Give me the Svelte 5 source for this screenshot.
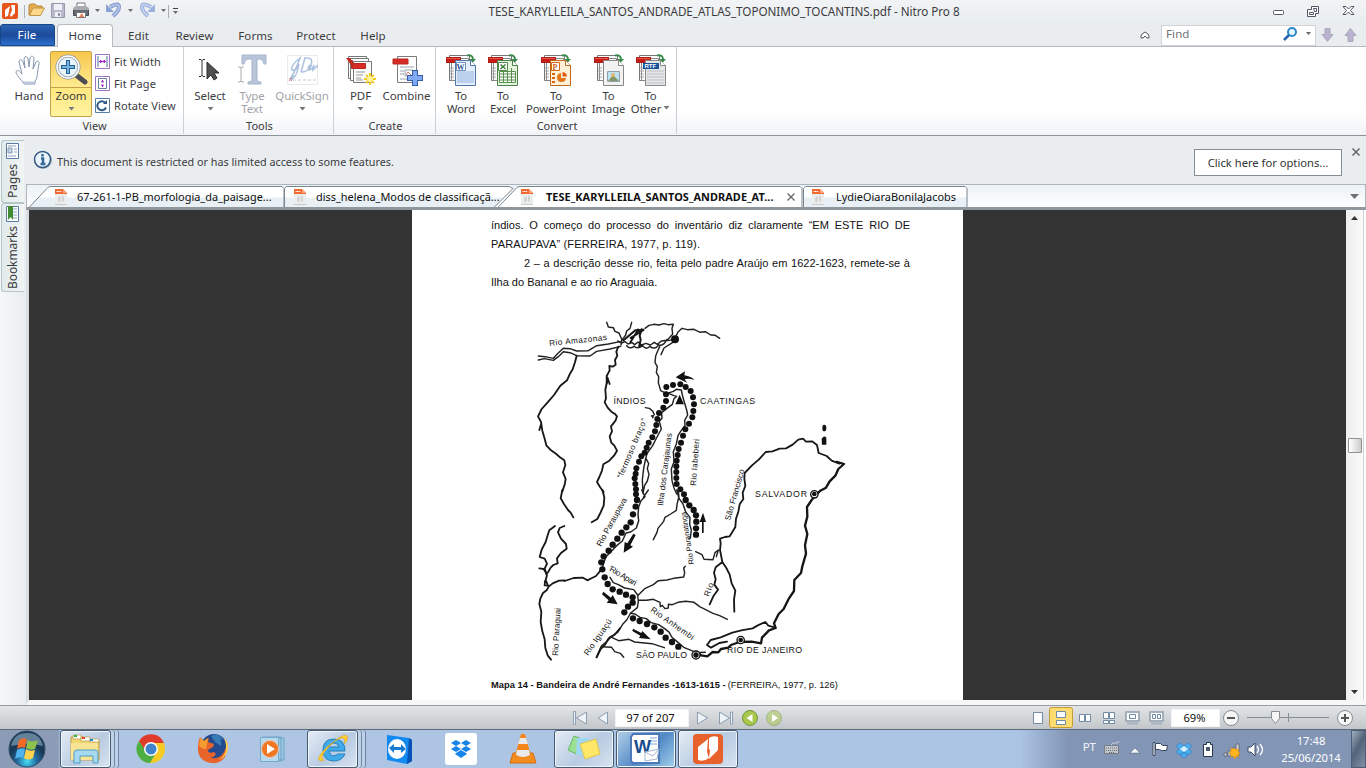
<script>
  const dotsNorth = [[409,216],[429,210],[451,208],[467,216],[482,228],[489,247],[492,268],[490,288],[487,307],[477,326],[466,343],[459,362],[453,383],[446,402],[443,420],[440,437],[439,454],[439,471],[439,489],[440,507],[451,523],[462,538],[408,238],[408,258],[400,278],[387,294],[382,312],[379,330],[375,349],[367,367],[356,383],[350,398],[344,413],[334,424],[327,440],[319,460],[317,476],[314,490],[316,507],[318,523],[318,538]];
  const dotsSouth = [[321,30],[317,50],[309,73],[302,97],[289,112],[275,128],[262,146],[248,164],[236,182],[221,199],[214,217],[217,238],[224,262],[233,282],[248,298],[269,305],[288,314],[308,322],[308,338],[294,350],[283,367],[309,385],[329,393],[351,402],[373,412],[392,425],[407,443],[426,456],[445,470],[467,30],[478,46],[491,60],[498,76],[499,95],[498,115],[498,134]];
  const menus = [['Edit', 43], ['Review', 59], ['Forms', 53], ['Protect', 58], ['Help', 46]];
</script>

{#snippet caret()}<svg class="caret" width="7" height="4" viewBox="0 0 7 4"><path d="M.5 0h6L3.500 3.500z" fill="#777" /></svg>{/snippet}

{#snippet pdfIcon()}
  <svg width="12" height="16" viewBox="0 0 12 16"><path d="M0 0h8l4 4v11.500H0z" fill="#eceded" /><path d="M0 0h8l4 4v1H0z" fill="#f26a30" /><path d="M8 0v4h4" fill="#ffa67e" /><path d="M1.500 2.500h5" stroke="#fff" stroke-width="1.200" stroke-dasharray="1.200 .4" /><path d="M3 12V9l2-2 1 2-1 5zM7 6l2 2v4l-2 1z" fill="#d2d2d2" /><path d="M0 15.500h12" stroke="#c9c9c9" /></svg>
{/snippet}

{#snippet sheets()}
  <path d="M4.500 1.500h20v25h-20z" fill="#fff" stroke="#777" /><path d="M6.500 4.500h17v22h-17z" fill="#fafafa" stroke="#888" /><path d="M5 14h4M5 17h4M5 20h4M5 23h4" stroke="#aaa" />
  <path d="M1 3h15v6H1z" fill="#c91a15" /><path d="M1 3h15v2H1z" fill="#e8574a" /><path d="M1.500 3.500h14v5h-14z" fill="none" stroke="#a52019" />
  <path d="M22 1.500q6-1 6 4" fill="none" stroke="#388a4a" stroke-width="2" /><path d="M24.500 5h6.500l-3.500 4z" fill="#388a4a" />
{/snippet}

{#snippet doc(edge, fill)}
  <path d="M10.500 6.500h15l5 5v20h-20z" {fill} stroke={edge} /><path d="M25.500 6.500v5h5" fill="#fff" stroke={edge} />
{/snippet}

<div class="app">
  <header class="title">
    <svg class="logo" width="16" height="16" viewBox="0 0 16 16"><rect width="16" height="16" rx="2" fill="#e65419" /><path d="M3 14V7l5-4-2 10zM9 2h4v8l-4 4-1-2 2-5z" fill="#fff" /></svg>
    <svg class="quick" width="160" height="20" viewBox="20 0 160 20">
      <path d="M24.500 5v13M168.500 5v13" stroke="#aab0b5" />
      <path d="M29 15V5l2-1h4l2 2h5v3H34z" fill="#e6ad4f" stroke="#b78736" /><path d="M29.500 15.500L33 8h11.500l-4 7.500z" fill="#ffd98b" stroke="#c0944c" />
      <path d="M51.500 3.500h13v14h-13z" fill="#b7b8ca" stroke="#9698ab" /><path d="M54 4h8v6h-8zM55 12h6v5h-6z" fill="#edf0f5" /><path d="M58 13h2v3h-2z" fill="#9092a7" />
      <path d="M77 3h8v7h-8z" fill="#fff" stroke="#777" /><path d="M73.500 8.500h15v7h-15z" fill="#626973" stroke="#454b55" /><path d="M73 8l3-2h10l3 2v2H73z" fill="#a9abb0" /><path d="M76.500 12.500h9v5h-9z" fill="#fff" stroke="#777" /><path d="M79 17l3-4 2 4z" fill="#ef7956" />
      <path d="M110 7q9-5 9 0 0 4-6 9" fill="none" stroke="#8297cb" stroke-width="4" /><path d="M106 4v8h8z" fill="#8ba2d4" /><path d="M110 7q9-5 9 0 0 4-6 9" fill="none" stroke="#afc3eb" stroke-width="2" />
      <path d="M151 7q-9-5-9 0 0 4 6 9" fill="none" stroke="#9aaed8" stroke-width="4" /><path d="M155 4v8h-8z" fill="#9db2df" /><path d="M151 7q-9-5-9 0 0 4 6 9" fill="none" stroke="#c0d2f1" stroke-width="2" />
      <path d="M95 9h5l-2.500 3zM128 9h5l-2.500 3zM161 9h5l-2.500 3zM173 11h5l-2.500 3z" fill="#6b6d70" /><path d="M173 8.500h5" stroke="#444" />
    </svg>
    <span class="doctitle">TESE_KARYLLEILA_SANTOS_ANDRADE_ATLAS_TOPONIMO_TOCANTINS.pdf - Nitro Pro 8</span>
    <svg class="winbtns" width="90" height="20" viewBox="1270 0 90 20" fill="#fff" stroke="#55556a"><rect x="1273.500" y="10.500" width="10" height="4" rx="1" /><path d="M1311.500 6.500h7v7h-3v3h-8v-7h4z" /><path d="M1309.500 12.500h4v2h-4zM1313.500 8.500h3v3h-2z" /><path d="M1343 6.500h3l2.500 2.500 2.500-2.500h3l-3.500 4 3.500 4h-3l-2.500-2.500-2.500 2.500h-3l3.500-4z" /></svg>
  </header>

  <nav class="menu">
    <span class="file">File</span><span class="home">Home</span>
    {#each menus as [name, w]}<span class="mi" style:width="{w}px">{name}</span>{/each}
    <span class="grow"></span>
    <svg class="up" width="10" height="8" viewBox="0 0 10 8"><path d="M1 5q0-2 4-4 4 2 4 4v2H7L5 5 3 7H1z" fill="#fff" stroke="#55585f" /></svg>
    <div class="find"><span>Find</span><svg width="34" height="16" viewBox="0 0 34 16"><circle cx="11" cy="6" r="4" fill="#e8f6ff" stroke="#2588ca" stroke-width="2" /><path d="M8 9l-5 5" stroke="#2863ae" stroke-width="2.500" /><path d="M25 6h5l-2.500 3z" fill="#666" /></svg></div>
    <svg class="arrows" width="40" height="16" viewBox="0 0 40 16" fill="#b9b3cf" stroke="#aaa7bb"><path d="M7 1.500h5v6h3l-5.500 7-5.500-7h3zM30 14.500h5v-6h3l-5.500-7-5.500 7h3z" /></svg>
  </nav>

  <section class="ribbon">
    <div class="group view">
      <div class="tools">
        <div class="tool hand"><svg width="32" height="32" viewBox="0 0 32 32"><path d="M11 30C8 25 3 21 3 18c1-3 4-1 6 2L6 8c0-3 3-3 4 0l2 6-1-9c0-3 4-3 4 0l1 8 1-9c1-3 4-2 4 1l-1 10 3-7c2-2 4 0 3 2-2 8-1 14-4 17v3z" fill="#fff" stroke="#8495ae" /><path d="M10 28.500h12" stroke="#b6c6da" stroke-width="2" /></svg><b>Hand</b></div>
        <div class="tool zoom"><svg width="34" height="32" viewBox="0 0 34 32"><path d="M22 21l9 7" stroke="#4c4d52" stroke-width="5" stroke-linecap="round" /><circle cx="14" cy="13" r="11" fill="#e9f5fb" stroke="#8c969c" stroke-width="3" /><circle cx="14" cy="13" r="11" fill="none" stroke="#fff" stroke-width="1.500" /><path d="M14 6v14M7 13h14" stroke="#215f99" stroke-width="4" /><path d="M14 7v12M8 13h12" stroke="#76b3dd" stroke-width="2" /></svg><b>Zoom</b>{@render caret()}</div>
        <div class="minis">
          <span><svg width="15" height="15" viewBox="0 0 15 15"><path d="M.5.500h14v14H.5z" fill="#fff" stroke="#9c75c5" /><path d="M3 2v11M12 2v11" stroke="#54709c" /><path d="M4 7.500h7M6 6L4.500 7.500 6 9zM9 6l1.500 1.500L9 9z" fill="#a529c8" stroke="#a529c8" /></svg>Fit Width</span>
          <span><svg width="15" height="15" viewBox="0 0 15 15"><path d="M.5.500h14v14H.5z" fill="#fff" stroke="#9c75c5" /><path d="M3.500 2.500h8v10h-8z" fill="#fff" stroke="#68809e" /><path d="M7.500 4v2M6.500 6l1-1 1 1zM7.500 11V9M6.500 9l1 1 1-1z" fill="#a529c8" stroke="#a529c8" /></svg>Fit Page</span>
          <span><svg width="15" height="15" viewBox="0 0 15 15"><path d="M.5.500h14v14H.5z" fill="#fff" stroke="#597da5" /><path d="M11 9.500a4.500 4.500 0 1 1-1-5" fill="none" stroke="#315c89" stroke-width="2" /><path d="M8 6h4V2z" fill="#315c89" /></svg>Rotate View</span>
        </div>
      </div><label class="viewlabel">View</label>
    </div>
    <div class="group toolgroup">
      <div class="tools">
        <div class="tool"><svg width="32" height="32" viewBox="0 0 32 32"><path d="M5 5.500h2l1 1 1-1h2M8 6v16M5 22.500h2l1-1 1 1h2" fill="none" stroke="#333" /><path d="M13 8v17l4-4 3 5 3-2-3-5h5z" fill="#505050" stroke="#303030" /></svg><b>Select</b>{@render caret()}</div>
        <div class="tool dim"><svg width="32" height="32" viewBox="0 0 32 32"><path d="M6 1h24v9h-2q-1-5-5-5h-2v21q0 2 4 2v2H12v-2q4 0 4-2V5h-3q-4 0-5 5H6z" fill="#b8c5da" stroke="#a6b4ca" /><path d="M2 13h2l1 1 1-1h2M5 14v13M2 28h2l1-1 1 1h2" fill="none" stroke="#aaa" /></svg><b>Type<br />Text</b></div>
        <div class="tool dim wide"><svg width="32" height="32" viewBox="0 0 32 32"><path d="M1.500 1.500h30v29h-30z" fill="#fff" stroke="#d7d7d7" stroke-dasharray="1 1" /><path d="M4 25Q9 18 14 4 4 12 6 16q5 1 7-6-2 13-8 16-2-2 3-4M15 18l4-14q9-1 6 7-4 8-10 7m7-2q3-2 3-5-4 1-2 5l3-1 2-4-1 5 2-2 2-2q2 3 3 0" fill="none" stroke="#adc1df" stroke-width="1.500" /><path d="M3 24l3 3M6 24l-3 3" stroke="#e37f83" /><path d="M7 26h24" stroke="#c8c8c8" stroke-dasharray="3 2" /></svg><b>QuickSign</b>{@render caret()}</div>
      </div><label>Tools</label>
    </div>
    <div class="group create">
      <div class="tools">
        <div class="tool"><svg width="32" height="32" viewBox="0 0 32 32"><path d="M3.500 2.500h18v22h-18z" fill="#fff" stroke="#777" /><path d="M5.500 4.500h18v22h-18z" fill="#fff" stroke="#777" /><path d="M8.500 7.500h18v21h-18z" fill="#fafafa" stroke="#777" /><path d="M1.500 4.500h4v6M3.500 6.500h4v6M6.500 9.500h14v5h-14z" fill="#d72b23" stroke="#b6291f" /><path d="M11 18h9M11 21h7M11 24h5M11 26h7" stroke="#999" /><path d="M25 19v12M19 25h12M21 21l8 8M29 21l-8 8" stroke="#f4cb20" stroke-width="2" /><circle cx="25" cy="25" r="3" fill="#fff393" /></svg><b>PDF</b>{@render caret()}</div>
        <div class="tool combine"><svg width="32" height="32" viewBox="0 0 32 32"><path d="M6.500 2.500h19v26h-19z" fill="#fff" stroke="#7b7b7b" /><path d="M2 5h15v5H2z" fill="#d72b23" stroke="#b6291f" /><path d="M9 13h14M9 17h4M9 20h4M9 25h13" stroke="#9aa0a8" /><path d="M14 16h8v6h-8z" fill="#fff" stroke="#9aa0a8" /><path d="M15 21l2-3 3 3" fill="none" stroke="#cf7d76" /><path d="M24 16v16M16 24h16" stroke="#345ca8" stroke-width="6" /><path d="M24 17v14M17 24h14" stroke="#80aaf1" stroke-width="4" /></svg><b>Combine</b></div>
      </div><label>Create</label>
    </div>
    <div class="group convert">
      <div class="tools">
        <div class="tool"><svg width="32" height="32" viewBox="0 0 32 32">{@render sheets()}{@render doc('#5277aa', '#e5effc')}<path d="M12 18h17M12 20h17M12 22h17M12 24h17M12 26h17M12 28h17" stroke="#91b2df" /><path d="M11.500 8.500h9v8h-9z" fill="#fff" stroke="#7093c4" /><text x="11.500" y="15.500" class="ic blue">W</text></svg><b>To<br />Word</b></div>
        <div class="tool excel"><svg width="32" height="32" viewBox="0 0 32 32">{@render sheets()}{@render doc('#478047', '#e5f4dc')}<path d="M12.500 17.500h16v11h-16zM12 20h16M12 23h16M12 26h16M16.500 17v12M20.500 17v12M24.500 14v15" fill="#fff" stroke="#56914c" /><path d="M11.500 8.500h9v8h-9z" fill="#fff" stroke="#518a4b" /><path d="M13.500 10.500l5 4.500M18.500 10.500l-5 4.500" stroke="#3e7e3b" stroke-width="1.500" /></svg><b>To<br />Excel</b></div>
        <div class="tool ppt"><svg width="32" height="32" viewBox="0 0 32 32">{@render sheets()}{@render doc('#be681d', '#fff0d9')}<path d="M11.500 8.500h8v8h-8z" fill="#fff" stroke="#d46b13" /><text x="12.500" y="15.500" class="ic orange">P</text><path d="M21 19a4.500 4.500 0 1 0 5 5h-5z" fill="#e17518" /><path d="M22.500 18a5 5 0 0 1 4.500 4.500h-4.500z" fill="#df5b0e" /><path d="M12 20h3M12 24h3M12 28h3" stroke="#db6508" stroke-width="2" /></svg><b>To<br />PowerPoint</b></div>
        <div class="tool img"><svg width="32" height="32" viewBox="0 0 32 32">{@render sheets()}{@render doc('#888', '#f3f3f3')}<path d="M14.500 17.500h12v10h-12z" fill="#bde3f0" stroke="#91a1aa" /><path d="M15 27l5-6 6 6z" fill="#889769" /><circle cx="20" cy="21" r="2" fill="#e6b267" /></svg><b>To<br />Image</b></div>
        <div class="tool other"><svg width="32" height="32" viewBox="0 0 32 32">{@render sheets()}{@render doc('#888', '#e4e6e8')}<path d="M12 17h17M12 20h17M12 23h17M12 26h17M12 29h17" stroke="#bfc3c7" /><path d="M8 9h16v6H8z" fill="#175199" /><text x="9.500" y="14" class="rtf">RTF</text></svg><b>To<br />Other<span>{@render caret()}</span></b></div>
      </div><label>Convert</label>
    </div>
  </section>

  <main>
    <aside>
      <div class="side pages"><svg width="13" height="16" viewBox="0 0 13 16"><path d="M.5.500h12v15H.5z" fill="#fff" stroke="#597da5" /><path d="M2 3h8M8 6h3M8 9h3M2 13h8" stroke="#85a1c1" /><path d="M2 5h4v5H2z" fill="#c4d5e7" stroke="#8199b4" /></svg><span>Pages</span></div>
      <div class="side marks"><svg width="13" height="16" viewBox="0 0 13 16"><path d="M.5.500h12v15H.5z" fill="#fff" stroke="#597da5" /><path d="M7 3h4M7 6h4M7 9h4M7 12h4" stroke="#85a1c1" /><path d="M2 0h5v14l-2.500-3L2 14z" fill="#3f8c31" /></svg><span>Bookmarks</span></div>
    </aside>
    <div class="work">
      <div class="notice">
        <svg width="20" height="20" viewBox="0 0 20 20"><circle cx="10" cy="10" r="9" fill="#9fb0c2" /><circle cx="9.500" cy="9.500" r="8" fill="#eaf4fc" stroke="#315881" stroke-width="1.500" /><path d="M9.500 4v2.500M8 8.500h2V14m-2.500 0h5" fill="none" stroke="#366996" stroke-width="2.500" /></svg>
        <span class="msg">This document is restricted or has limited access to some features.</span>
        <button>Click here for options...</button>
        <svg class="x" width="10" height="10" viewBox="0 0 10 10"><path d="M1.500 1.500l7 7M8.500 1.500l-7 7" stroke="#666" stroke-width="1.500" /></svg>
      </div>
      <div class="tabs">
        <div class="tab t1"><svg class="shape" width="257" height="23" viewBox="0 0 257 23"><path d="M0 22.500L19 2.500Q20 .5 23 .5H254l2 2v20" fill="url(#tabshade)" stroke="#7b858d" /><defs><linearGradient id="tabshade" x2="0" y2="1"><stop offset=".48" stop-color="#fff" /><stop offset=".52" stop-color="#e9f0f5" /></linearGradient></defs></svg><i>{@render pdfIcon()}</i><span>67-261-1-PB_morfologia_da_paisage...</span></div>
        <div class="tab t2"><svg class="shape" width="238" height="23" viewBox="0 0 238 23"><path d="M.5 22.500v-20l2-2H225l4 2-20 20z" fill="url(#tabshade)" stroke="#7b858d" /></svg><i>{@render pdfIcon()}</i><span>diss_helena_Modos de classificaçã...</span></div>
        <div class="tab t3"><svg class="shape" width="313" height="23" viewBox="0 0 313 23"><path d="M0 22.500L19 2.500Q20 .5 23 .5H303l2 2v20" fill="#fff" stroke="#7b858d" /></svg><i>{@render pdfIcon()}</i><span>TESE_KARYLLEILA_SANTOS_ANDRADE_AT...</span><svg class="x" width="10" height="10" viewBox="0 0 10 10"><path d="M1.500 1.500l7 7M8.500 1.500l-7 7" stroke="#666" stroke-width="1.300" /></svg></div>
        <div class="tab t4"><svg class="shape" width="165" height="23" viewBox="0 0 165 23"><path d="M.5 22.500v-20l2-2H162l2 2v20" fill="url(#tabshade)" stroke="#7b858d" /></svg><i>{@render pdfIcon()}</i><span>LydieOiaraBonilaJacobs</span></div>
        <svg class="menuarrow" width="9" height="5" viewBox="0 0 9 5"><path d="M0 0h9L4.500 5z" fill="#6d7174" /></svg>
      </div>
      <div class="viewer">
        <article>
          <p class="spread">índios. O começo do processo do inventário diz claramente “EM ESTE RIO DE</p>
          <p class="cite">PARAUPAVA” (FERREIRA, 1977, p. 119).</p>
          <p class="indent spread">2 – a descrição desse rio, feita pelo padre Araújo em 1622-1623, remete-se à</p>
          <p>Ilha do Bananal e ao rio Araguaia.</p>
          <svg class="map" width="330" height="350" viewBox="530 315 330 350">
            <g transform="translate(530 315) scale(.333333)">
              <g class="line">
                <path d="M25 123l20 2 25 5 14-15 16-15 20 1 20 7 35-1 25-15 35-5 35-7M25 135l18-4 27 5 15-11 15-15 20 3 20 9 40 1 20-14 40-7 32-8" />
                <path d="M230 22l5 14 15 2 5 11 12 5 8 18-2 18M305 22l-5 18-10 8-3 12-12 17M345 40l12-9 15-3 15 2 15-4 12 3 16-1-4 12 2 18-8 8-8 10-18 2-12 10-9-6-12 8-13-5-14 5-10-9-10 8-8-6-12 4-9-7-10 4-12-6M290 92q10 12 22 2q10 10 26-2q10 14 22 2q14 12 26-4q16 4 25-17" />
                <path d="M413 77l20-4 11-22 12-11 16 4 20-1 18 9 16-2 16 10 14 1 13 9M389 95l-6 13-6 15-2 20 7 12-3 18 7 12-1 18 7 24 18 9 20-7 9-6 15 2 3 15 5 18 8 27 3 15-9 16 1 15-13 18-8 13-5 25-9 23 2 30-8 22 2 35 6 22 8 18M432 80l-30 19-9 20" />
                <path d="M408 232l24 10 8 2-8 7-5 17-17 13-15 12 1 17-8 9 6 23-13 24-13 26-17 24-5 19-5 25-4 35 2 40M348 430l8 16-4 15 5 17-5 20-8 13-5 23M346 278l12 2 10 8 5 11M364 303l6-1-2 6" />
              </g>
              <g class="heavy"><path d="M140 122l-5 20-7 21-8 13-9 20-20 16-19 28-19 22-18 20-11 22 9 17 4 26 7 24 5 20 12 13 18 13 11 10 13 9 3 14-7 22 8 20-3 17-7 20M28 345l6-20M265 95l-6 15 3 12-7 13 2 14-9 6-10-2 1 13-9 17v21l-4 21 2 25-4 12 9 16 11 12 10 6 7 8-4 12-14 18 3 15-7 15 5 19 9 9 8 15-9 15-14 15-18 11-4 19-8 19-7 15 9 15 11 15M231 205l1-18 7 20" /></g>
              <g class="thick"><path d="M278 78l38-32 26-2-42 26m0 14l26-43m10 0l-7 21 3 12-5 22m-2-45l12-8m-7 44l6 8" /></g>
              {#each dotsNorth as [x, y]}<circle cx={x} cy={y} r="9" />{/each}
              <circle cx="435" cy="73" r="12" /><path d="M436 268l13-29 13 29zM437 187l28-18-2 12q21 3 30 14-17-6-29-2l7 10z" />
            </g>
            <g transform="translate(530 490) scale(.333333)">
              <g class="line">
                <path d="M335 0l10 20-12 12-7 18-2 24 2 18-7 22-17 12-14 3-11 24-17 14-15 16-17 17-8 22-3 14M340 22l15-22M440 0l6 22-5 22-2 17-17 11-17 10-4 12-17 21-3 12-11 22M445 0l2 25 12 17 8 24 13 16-1 21 5 17-3 24-4 2" />
                <path d="M240 262l10 16 15 6 19 10 27 5 12 16 2 19-3 19-20 16-12 21-12 13-15 24-20 13-11 13-18 15-15 34M325 315l19-19 26-12 15-12 26-2 20-5 30-4 3-13-3-14 5-5M325 330l25 1 20-3 20 9 1 13 6-4 8 10 10-2v-11l12 1 17-7 23-3 25 3 17 13 18 9 22 11 20 7 23 11" />
                <path d="M301 370l14 2 15 10 19 4 14 12 23 6 17 11 15 12 7 14 19 16 17 15 17 7 21 9 27-1M240 440l26 12 31-4 17 8 30 3 22 2 37 12M215 470l30 2 9 13 17 5 10 12" />
              </g>
              <g class="heavy"><path d="M97 0l-5 25 10 17 12 18 8 8 8 14M217 0l6 22-2 25-10 22-9 18-17 10M75 108l-17 13-5 15-6 20-12 23-6 22 15 5 7 15-7 15 7 20-4 14 7 17-10-1 1-13m59-2l-17 1-19 8-12 10-6 11-11 8-8 17-3 16 6 23-2 31 5 28 7 24 2 26 7 22 10 13M104 273l27-9 28-1 13 8 14-7 12-6 16-19M103 108l-14 6-5 13 9 19 15 16 2 14-17 13-12 16 2 15-13 5-8 8-8 14-6 5m-20-17l13 2 6 10M270 415l-17 20-17 10-11 19-13 13-12 25" /></g>
              {#each dotsSouth as [x, y]}<circle cx={x} cy={y} r="9.500" />{/each}
              <path d="M317 135l-16 31 8 4-28 18 3-32 8 4 18-29zM220 305l23 18 5-8 15 28-33-5 6-7-20-18zM309 416l25 13 3-6 25 25-35-4 4-7-24-14zM516 129V96h-7l10-28 9 28h-7v33z" />
            </g>
            <g transform="translate(690 410) scale(.333333)">
              <g class="line"><path d="M17 425l19 9 6 14 27 1 6-21 10-8-6 20" /></g>
              <g class="heavy"><path d="M90 420l7 36 12 18 10 20 6 26 11 22-4 27 1 36M97 456l-20 16-5 16 5 20-4 16 11 15-13 18-12 26M90 422l2-22-2-14 15-5 14-2 8-13 9-15 2-25 7-21 4-22 11-16-2-19 8-20-3-22 1-17 22-23 21-18 20-22 20-2 22-8 19-1 20-11 17-15 14-3 9 9 18-1 15 11 5 24 24 9 15 14 23 9" /><path d="M253 652l-18-5-9-11-24 11-14 8-34 6-27 7-35 14-30 8-11 15 12 8 25-14 23-4" /></g>
              <g class="coast"><path d="M438 155l24 7-17 15-9 20-17 17-11 19-17 9-15 15-11 13-14 21 1 29-7 27 7 25-7 34 3 25-11 38-4 20-20 21-1 33-15 22-16 32-15 15-14 28 5 14-20 7-21 22-3 17-28-5-36 1-26 9-8 8-22 4-8 10-17-1-16 13-19-3-10-10" /></g>
              <ellipse cx="403" cy="54" rx="6" ry="10" /><path d="M395 86q8-12 14-3v21h-13z" />
              <g fill="#fff" stroke="#111" stroke-width="4"><circle cx="373" cy="253" r="11" /><circle cx="152" cy="690" r="11" /><circle cx="18" cy="735" r="12" /></g><circle cx="373" cy="252" r="7" /><circle cx="152" cy="690" r="7" /><circle cx="18" cy="735" r="8" />
            </g>
            <g class="labels">
              <text transform="translate(549.500 346) rotate(-6)" textLength="58">Rio Amazonas</text><text x="613.500" y="403.500" textLength="32" class="cap">ÍNDIOS</text><text x="700" y="404" textLength="55" class="cap">CAATINGAS</text>
              <text transform="translate(622 479) rotate(-67)" textLength="64">“fermoso braço”</text><text transform="translate(663 506) rotate(-83)" textLength="73">Ilha dos Carajaunas</text><text transform="translate(696 486) rotate(-86)" textLength="47">Rio Iabeberi</text>
              <text transform="translate(601 547) rotate(-61)" textLength="54">Rio Paraupava</text><text transform="translate(694 564) rotate(-99)" textLength="53" class="small">Rio Paranatinga</text><text transform="translate(608 570) rotate(31)" textLength="31">'Rio Apari</text>
              <text transform="translate(650 611) rotate(35)" textLength="51">Rio Anhembi</text><text transform="translate(558 656) rotate(-87)" textLength="48">Rio Paraguai</text><text transform="translate(588 656) rotate(-55)" textLength="42">Rio Iguaçú</text>
              <text transform="translate(730 521) rotate(-74)" textLength="53">São Francisco</text><text transform="translate(709 597) rotate(-70)" textLength="14">Rio</text><text x="755" y="497" textLength="52" class="cap">SALVADOR</text><text x="636" y="658" textLength="51" class="cap">SÃO PAULO</text><text x="727" y="653" textLength="75" class="cap">RIO DE JANEIRO</text>
            </g>
          </svg>
          <footer><strong>Mapa 14 - Bandeira de André Fernandes -1613-1615 - </strong><span>(FERREIRA, 1977, p. 126)</span></footer>
        </article>
        <div class="scroll"><svg width="7" height="4" viewBox="0 0 7 4"><path d="M0 4h7L3.500 0z" fill="#333" /></svg><i></i><svg width="7" height="4" viewBox="0 0 7 4"><path d="M0 0h7L3.500 4z" fill="#333" /></svg></div>
      </div>
    </div>
  </main>

  <div class="status">
    <svg class="navs" width="40" height="16" viewBox="0 0 40 16" fill="#edf3f8" stroke="#8c9eb0"><path d="M.5 1.500h2v13h-2zM13.500 2v12L3.500 8zM34.500 2v12L25 8z" /></svg>
    <span class="field pageno">97 of 207</span>
    <svg class="navs2" width="88" height="18" viewBox="696 708 88 18" fill="#edf3f8" stroke="#8c9eb0"><path d="M697.500 711v12l10-6zM719.500 711v12l10-6zM730.500 711h2v12h-2z" /><g stroke="#6f9741" fill="#a8c74b"><circle cx="750" cy="717" r="7.500" /><circle cx="774" cy="717" r="7.500" opacity=".5" /></g><path d="M752.500 713v8l-6-4zM772 713v8l6-4z" fill="#fff" stroke="none" /></svg>
    <span class="grow"></span>
    <svg class="modes" width="140" height="22" viewBox="1029 706 140 22" fill="#fff" stroke="#718aa6"><path d="M1033.500 711.500h9v11h-9z" /><rect x="1049.500" y="706.500" width="23" height="20" rx="2" fill="#ffdc70" stroke="#c69a35" /><path d="M1056.500 710.500h9v6h-9zM1056.500 719.500h9v4h-9zM1079.500 713.500h5v7h-5zM1085.500 713.500h5v7h-5zM1103.500 711.500h5v6h-5zM1109.500 711.500h5v6h-5zM1103.500 719.500h5v3h-5zM1109.500 719.500h5v3h-5z" /><path d="M1126 711h13v9h-13zM1150 711h13v9h-13z" stroke="#a3afbb" stroke-width="2" /><path d="M1129.500 713.500h6v4h-6zM1152.500 713.500h3v4h-3zM1157.500 713.500h3v4h-3z" /><path d="M1127 722.500h11M1151 722.500h11" stroke="#a3afbb" stroke-width="2" /></svg>
    <span class="field pct">69%</span>
    <svg class="slider" width="140" height="20" viewBox="1221 707 140 20" fill="#f6f6f6" stroke="#868d94"><circle cx="1231" cy="717" r="7.500" /><circle cx="1345" cy="717" r="7.500" /><path d="M1247 716.500h82M1288.500 712v9" /><path d="M1271.500 710.500h8v7l-4 5-4-5z" /><path d="M1227 717h8M1341 717h8M1345 713v8" stroke="#555" stroke-width="2" /></svg>
  </div>

  <div class="taskbar">
    <div class="start"><svg width="38" height="38" viewBox="0 0 38 38"><defs><radialGradient id="orb" cy=".85"><stop stop-color="#45dcf3" /><stop offset=".55" stop-color="#226a9e" /><stop offset="1" stop-color="#193954" /></radialGradient></defs><circle cx="19" cy="19" r="18" fill="url(#orb)" stroke="#324e6a" /><path d="M3 16Q6 3 19 3t16 13q-15-4-32 0" fill="#8ca9c0" opacity=".65" /><path d="M11 10q4-3 8-1l-2 9q-4-2-8 1z" fill="#f26a27" /><path d="M20 10q4 3 10 0l-3 9q-5 2-9-1z" fill="#8ec34b" /><path d="M9 20q4-3 8-1l-2 9q-4-2-8 1z" fill="#4fb3ee" /><path d="M18 19q4 3 9 1l-2 8q-5 3-9 0z" fill="#ffd24e" /></svg></div>
    <div class="task on stack"><svg width="34" height="32" viewBox="0 0 34 32"><path d="M2 4h12l2 3h14v20H2z" fill="#efd774" stroke="#bd9e45" /><path d="M4 2h8v4H4zM12 4h9v4h-9zM21 6h9v3h-9z" fill="#fff" stroke="#b99a45" stroke-width=".7" /><path d="M5 2h3v2H5z" fill="#28b943" /><path d="M13 4h3v2h-3z" fill="#e54925" /><path d="M21 6h3v2h-3z" fill="#258bd1" /><path d="M2 10h27v17H2z" fill="#f8e494" /><path d="M5 30V20q0-3 3-3h19q2 0 2 3v10h-5v-7H11v7z" fill="#a5daf0" stroke="#519cc2" /></svg></div>
    <div class="task c62 chrome"><svg width="30" height="30" viewBox="0 0 30 30"><circle cx="15" cy="15" r="14" fill="#f6cb25" /><path d="M3 7A14 14 0 0 1 28 9H15l-6 8z" fill="#e13b2e" /><path d="M3 7A14 14 0 0 0 14 29l6-10-8 2z" fill="#4daf43" /><circle cx="15" cy="15" r="7" fill="#fff" /><circle cx="15" cy="15" r="5.500" fill="#3e83cb" /></svg></div>
    <div class="task c62 chrome"><svg width="32" height="32" viewBox="0 0 32 32"><circle cx="17" cy="14" r="13" fill="#234a8c" /><path d="M14 3q7-4 13 4-3-1-4-1 2 3 1 7l-6-4z" fill="#387bb5" /><path d="M3 4l4 4q3-3 5-3l-1 4 6 2-1 3-5 3q0 4 6 2l2 2q-3 5-7 3 9 4 15-5 4-7 2-14 4 10-1 19-5 7-13 6Q0 28 1 14q0-6 2-10z" fill="#e9642b" /><path d="M27 5q6 14-5 22 12-6 8-18z" fill="#ffd34d" /><path d="M3 5l4 3 4-3-1 6-1 5q-5 0-7-4z" fill="#f79c31" /></svg></div>
    <div class="task c60 chrome"><svg width="30" height="28" viewBox="0 0 30 28"><path d="M7 3h18v22H7zM4 2h18v24H4z" fill="#9bc8e5" stroke="#6da3c5" /><path d="M1.500 2.500h18v24h-18z" fill="#b7d9ee" stroke="#75a9ca" /><circle cx="11" cy="14" r="8.500" fill="#ef7622" stroke="#f1c5aa" /><path d="M8 9l8 5-8 5z" fill="#fff" /></svg></div>
    <div class="task on stack ie"><svg width="32" height="32" viewBox="0 0 32 32"><path d="M28 18q0-12-11-12Q6 6 6 17t11 11q8 0 11-7h-7q-7 5-9-3zm-16-4q1-4 5-4t5 4z" fill="#40aaea" stroke="#2581bd" /><path d="M5 28q-9 0 5-14Q27-1 30 3q2 3-3 8 2-6-2-6-7 1-16 12-7 9-2 10z" fill="#ffcd32" stroke="#d5a224" stroke-width=".6" /></svg></div>
    <div class="task c62 tv"><svg width="28" height="32" viewBox="0 0 28 32"><path d="M2 2l22 3 3 2v21l-5 3-20-4z" fill="#128af2" /><path d="M24 5l3 2v21l-5 3z" fill="#0752b4" /><ellipse cx="12" cy="16" rx="9" ry="10" fill="#fff" /><path d="M4 15l5-4v3h7v-3l5 5-5 4v-3H9v3z" fill="#167ad2" /></svg></div>
    <div class="task c62"><svg width="32" height="32" viewBox="0 0 32 32"><rect width="32" height="32" rx="3" fill="#fff" /><path d="M6 10l5-3 5 3-5 3zM16 10l5-3 5 3-5 3zM6 16l5-3 5 3-5 3zM16 16l5-3 5 3-5 3zM10 21l1-1 5-3 5 3 1 1-6 4z" fill="#1684e8" /></svg></div>
    <div class="task c62"><svg width="30" height="32" viewBox="0 0 30 32"><path d="M5 20h20l3 10H2z" fill="#f38e1e" stroke="#d36c0c" /><path d="M13 1h4l6 22q-8 4-16 0z" fill="#f4851a" /><path d="M12 5h6l2 6H10zM9 17h12l1 5q-7 4-14 0z" fill="#e9e9e9" /></svg></div>
    <div class="task on app1"><svg width="34" height="28" viewBox="0 0 34 28"><path d="M7 1l11 4-6 15-11-5z" fill="#9bdf94" stroke="#69b966" /><path d="M10 3h12v17H9z" fill="#a1d8f1" /><path d="M13 9l16-5 4 15-15 5z" fill="#ffe867" stroke="#dec64f" /></svg></div>
    <div class="task on app2 word"><svg width="32" height="32" viewBox="0 0 32 32"><path d="M3 1h26v29H3l-2-2V4z" fill="#fff" stroke="#4a78b9" stroke-width="2" /><path d="M20 5h7M20 8h7M20 11h7" stroke="#83a6d4" /><text x="4" y="20" class="bigw">W</text><path d="M15 19l14-3-2 10-12 2z" fill="#fff" stroke="#a3b5ce" /><path d="M15 19l8 4 6-7" fill="none" stroke="#a3b5ce" /></svg></div>
    <div class="task on app3"><svg width="32" height="32" viewBox="0 0 32 32"><rect x="1" y="1" width="30" height="30" rx="4" fill="#e8602b" /><path d="M6 27V14l10-8-1 13 2 6q-5 4-11 2M17 5q4-3 9-1v13l-9 9 1-9q-2-1-1-3z" fill="#fff" /></svg></div>
    <span class="grow"></span>
    <span class="lang">PT</span>
    <svg class="tray" width="166" height="24" viewBox="1102 736 166 24"><path d="M1104.500 744.500h14v8h-14z" fill="#c4c9cf" stroke="#777c83" /><path d="M1106 747h12M1106 749.500h12M1109 751.500h6" stroke="#666" stroke-dasharray="1 1" /><path d="M1111 744q1-3 5-2 3 0 3-2" fill="none" stroke="#ccd2d9" /><path d="M1130 752h10l-5-5z" fill="#fff" stroke="#596781" stroke-width=".6" /><path d="M1153 741.500h2v13h-2z" fill="#fff" stroke="#384861" /><path d="M1155.500 742.500h5l2 2h5l-1 5h-5l-2-1h-4z" fill="#fff" stroke="#384861" /><path d="M1176 745l4-3 4 3 4-3 4 3-3 3 3 3-4 3-4-3-4 3-4-3 3-3zM1180 754l4-3 4 3-4 3z" fill="#4ca9eb" stroke="#247cbb" stroke-width=".5" /><path d="M1180 748l4-3 4 3-4 3z" fill="#d9effc" /><path d="M1206.500 741.500h4v2h2v12h-9v-12h3z" fill="#fff" stroke="#27354b" /><path d="M1206 746h4v4h-4z" fill="#4b5c75" /><path d="M1224 755h3v-3h-3zM1228 755h3v-5h-3zM1232 755h3v-8h-3zM1236 755h3v-12h-3z" fill="#caced4" stroke="#535861" stroke-width=".7" /><path d="M1235 747l1 2 3-1-1 3 2 1-2 2 1 2-3-1-1 3-2-3-2 1v-3l-2-1 2-2v-3l3 1z" fill="#ffb51e" stroke="#e78b10" stroke-width=".6" /><path d="M1248 746h3l4-4v13l-4-4h-3z" fill="#fff" stroke="#3f4e66" /><path d="M1257 745q3 4 0 7M1260 743q5 6 0 11" fill="none" stroke="#fff" stroke-width="1.300" /></svg>
    <div class="clock">17:48<br />25/06/2014</div><span class="peek"></span>
  </div>
</div>

<style>
  :global(body) { margin: 0; overflow: hidden; }
  * { box-sizing: border-box; }
  svg { display: block; flex: none; }
  .app { width: 1366px; height: 768px; display: flex; flex-direction: column; background: #e9edef; font: 11.5px "Noto Sans", "Open Sans", sans-serif; color: #3c3c3f; white-space: nowrap; overflow: hidden; }
  .grow { flex: 1; }
  .title { height: 24px; display: flex; background: linear-gradient(#f2f3f5, #e8edef); flex: none; }
  .logo { margin: 3px 2px 0 2px; }
  .doctitle { width: 1090px; text-align: center; padding-right: 2px; line-height: 23px; letter-spacing: -.04px; font-size: 11.700px; }
  .menu { height: 23px; display: flex; flex: none; align-items: center; border-bottom: 1px solid #b5bbc0; background: #eaedef; letter-spacing: .1px; }
  .file { width: 55px; height: 22px; line-height: 20px; background: linear-gradient(#2c64b4, #1d4a9a 50%, #2b70cc); color: white; text-align: center; border: 1px solid #174787; border-radius: 3px 3px 0 0; padding-right: 1px; }
  .home { width: 56px; height: 24px; margin-left: 2px; line-height: 22px; text-align: center; background: white; border: 1px solid #b5bbc0; border-bottom: 0; border-radius: 4px 4px 0 0; align-self: flex-start; }
  .mi { text-align: center; margin-left: 5px; }
  .home + .mi { margin-left: 4px; }
  .up { margin-right: 11px; }
  .find { width: 155px; height: 21px; background: white; border: 1px solid #cfd3d8; display: flex; align-items: center; justify-content: space-between; padding: 0 0 3px 4px; color: #6f7176; margin-right: 2px; }
  .arrows { margin-right: 8px; }
  .ribbon { height: 89px; display: flex; flex: none; border-bottom: 1px solid #8d9399; background: linear-gradient(#fff 72%, #f1f3f7); }
  .group { height: 87px; border-right: 1px solid #cbd0d6; display: flex; flex-direction: column; }
  .group label { text-align: center; line-height: 16px; font-size: 11px; padding-left: 2px; }
  .group .viewlabel { padding-left: 6px; }
  .tools { height: 71px; display: flex; align-items: flex-start; justify-content: center; padding-top: 4px; }
  .tool { display: flex; flex-direction: column; align-items: center; width: 42px; height: 66px; padding-top: 3px; }
  .tool b { font-weight: 400; line-height: 13px; text-align: center; margin-top: 3px; letter-spacing: -.1px; }
  .tool .caret { margin-top: 5px; }
  .dim { color: #a2a4a9; }
  .view { width: 184px; }
  .view .tools { justify-content: flex-start; }
  .hand { width: 50px; padding-left: 8px; }
  .zoom { border: 1px solid #c6a046; background: linear-gradient(#f7c74e, #ffeb91 54%, #c7a144 54%, #c7a144 56%, #ffe77e 56%, #fff3a1); border-radius: 2px; padding-top: 2px; }
  .minis { display: flex; flex-direction: column; margin-left: 3px; margin-top: -1px; }
  .minis span { display: flex; align-items: center; gap: 4px; height: 22px; letter-spacing: .1px; font-size: 11px; }
  .toolgroup { width: 150px; }
  .toolgroup .tools { justify-content: flex-start; padding-left: 5px; }
  .wide { width: 58px; }
  .create { width: 102px; }
  .combine { width: 50px; }
  .create .tools { padding-left: 2px; }
  .convert { width: 241px; }
  .convert .tools { justify-content: flex-start; padding-left: 4px; }
  .convert b { font-size: 11.300px; }
  .ppt { width: 64px; }.img { width: 41px; }.other { width: 43px; }
  .other span { display: inline-block; margin-left: 2px; vertical-align: 3px; }
  .other .caret { margin-top: 0; }
  .ic { font: bold 8px "Liberation Serif", serif; }.blue { fill: #315895; }.orange { fill: #cb5f16; }
  .rtf { font: bold 6px "Liberation Sans", sans-serif; fill: white; }
  main { height: 569px; display: flex; flex: none; background: #e9edef; }
  aside { width: 26px; padding: 4px 0 0 1px; background: linear-gradient(90deg, #f5f8fa, #e9edef); }
  .side { width: 23px; border: 1px solid #b6c5c5; border-right: 0; background: linear-gradient(90deg, #e1eaea, #f1f4f4); border-radius: 3px 0 0 3px; display: flex; flex-direction: column; align-items: center; padding: 2px 2px 0 0; }
  .side span { writing-mode: vertical-rl; transform: rotate(180deg); font-size: 12px; margin-top: 5px; }
  .pages { height: 63px; }.marks { height: 89px; }
  .marks span { margin-top: 4px; letter-spacing: -.1px; }
  .work { width: 1340px; }
  .notice { height: 48px; padding: 0 0 0 7px; display: flex; align-items: center; }
  .msg { margin-left: 4px; flex: 1; padding-top: 3px; font-size: 10.800px; }
  .notice button { width: 148px; height: 27px; border: 1px solid #858e96; background: white; color: #333; padding: 0; font: inherit; font-size: 11.200px; margin: 4px 9px 0 0; }
  .notice > .x { margin: 0 5px 17px 0; }
  .tabs { height: 26px; border: 1px solid #aeb5bb; border-bottom: 3px solid #90979c; background: linear-gradient(#ebf1f7, #fff); display: flex; position: relative; padding: 1px 0 0 1px; }
  .tab { position: relative; height: 21px; display: flex; align-items: center; color: #101010; font-size: 10.930px; }
  .shape { position: absolute; left: 0; top: 0; height: 21px; }
  .shape { height: 23px; clip-path: inset(0 0 2px 0); }
  .tab i, .tab span, .tab .x { position: relative; flex: none; }
  .t1 { width: 256px; padding-left: 27px; }.t2 { width: 220px; padding-left: 10px; }.t3 { width: 299px; padding-left: 17px; font-weight: 700; }.t4 { width: 165px; padding-left: 9px; }
  .tab i { width: 22px; }
  .t3 i { width: 25px; }
  .t4 i { width: 24px; }
  .t3 span { width: 229px; font-size: 10.900px; letter-spacing: .07px; }
  .t3 .x { margin-left: 11px; }
  .t3 .shape { left: -7px; }
  .menuarrow { position: absolute; right: 6px; top: 9px; }
  .viewer { height: 495px; background: #333; border-left: 3px solid #d9dcdf; border-bottom: 5px solid #f7f7f7; display: flex; justify-content: flex-end; }
  article { width: 551px; background: white; padding: 5.500px 53px 0 79px; font: 11.040px "Liberation Sans", sans-serif; color: #111; margin-right: 383px; }
  p { margin: 0; line-height: 19px; }
  .spread { text-align-last: justify; }
  .cite { letter-spacing: .15px; }
  .indent { padding-left: 33px; }
  .map { margin: 23px 0 0 39px; width: 330px; overflow: visible; fill: #111; }
  .line { fill: none; stroke: #222; stroke-width: 4.300; stroke-linejoin: round; stroke-linecap: round; }
  .heavy { fill: none; stroke: #181818; stroke-width: 5.500; stroke-linejoin: round; stroke-linecap: round; }
  .thick { fill: none; stroke: #181818; stroke-width: 6; }
  .coast { fill: none; stroke: #161616; stroke-width: 7; stroke-linejoin: round; }
  .labels { font: 8.200px "Liberation Sans", sans-serif; }
  .cap { font-size: 8.800px; }
  .small { font-size: 7.500px; }
  footer { font-size: 9.300px; line-height: 14px; margin-top: 13px; display: flex; gap: 2px; }
  footer strong { white-space: pre; letter-spacing: .04px; }
  .scroll { width: 20px; background: linear-gradient(90deg, #eee, #fafafa 17px, #a9afb4 17px, white 18px); display: flex; flex-direction: column; align-items: center; padding: 6px 3px 6px 0; }
  .scroll i { width: 14px; height: 15px; border: 1px solid #909090; background: linear-gradient(90deg, #fff, #ccc); margin: 218px 0 auto; border-radius: 1px; }
  .status { height: 24px; flex: none; background: linear-gradient(#e3e5e7, #c2c6ca); border-top: 1px solid #959ca2; display: flex; align-items: center; }
  .navs { margin-left: 573px; }
  .field { background: white; height: 18px; text-align: center; color: #111; border: 1px solid #f3f3f3; line-height: 15px; font-size: 11.200px; }
  .pageno { width: 74px; margin-left: 2px; padding-right: 3px; }
  .navs2 { margin-left: 7px; }
  .pct { width: 49px; margin-left: 2px; padding-right: 2px; }
  .slider { margin-left: 1px; margin-right: 5px; }
  .taskbar { height: 39px; flex: none; display: flex; align-items: center; border-top: 1px solid #596a7c; background: linear-gradient(90deg, #8c9cb6 0, #8c9cb6 58px, #aec5e3 61px, #acc4e4 1020px, #8295b5 1068px); }
  .start { width: 60px; padding-left: 8px; }
  .task { height: 38px; display: flex; align-items: center; justify-content: center; flex: none; }
  .chrome { padding-bottom: 1px; }
  .c62 { width: 62px; }.c60 { width: 60px; }
  .on { border: 1px solid #465b73; border-radius: 3px; background: linear-gradient(135deg, #e5ecf5, #b8cbe2 55%, #d7e3f0); box-shadow: inset 0 0 0 1px #eff5fa; }
  .stack { width: 51px; margin-right: 9px; box-shadow: inset 0 0 0 1px #eff5fa, 3px 0 0 #c0d2e7, 4px 0 0 #73879e, 7px 0 0 #bad0eb, 8px 0 0 #73879e; }
  .ie { margin-left: 3px; }
  .tv { margin-left: 1px; }
  .app1, .app2 { width: 60px; margin-right: 2px; }.app3 { width: 60px; }
  .word { background: linear-gradient(135deg, #b5cfe9, #5089c5 55%, #a4d0ed); }
  .bigw { font: bold 18px "Liberation Sans", sans-serif; fill: #174c91; }
  .lang { color: #f0f4fa; font-size: 11.500px; margin: -6px 6px 0 0; }
  .clock { width: 76px; margin: 0 2px 1px 5px; color: white; text-align: center; line-height: 17px; font-size: 11.200px; }
  .peek { width: 15px; height: 38px; background: linear-gradient(120deg, #a0afbd, #53647a 45%, #8290a6); border: 1px solid #4c5d75; }
</style>
